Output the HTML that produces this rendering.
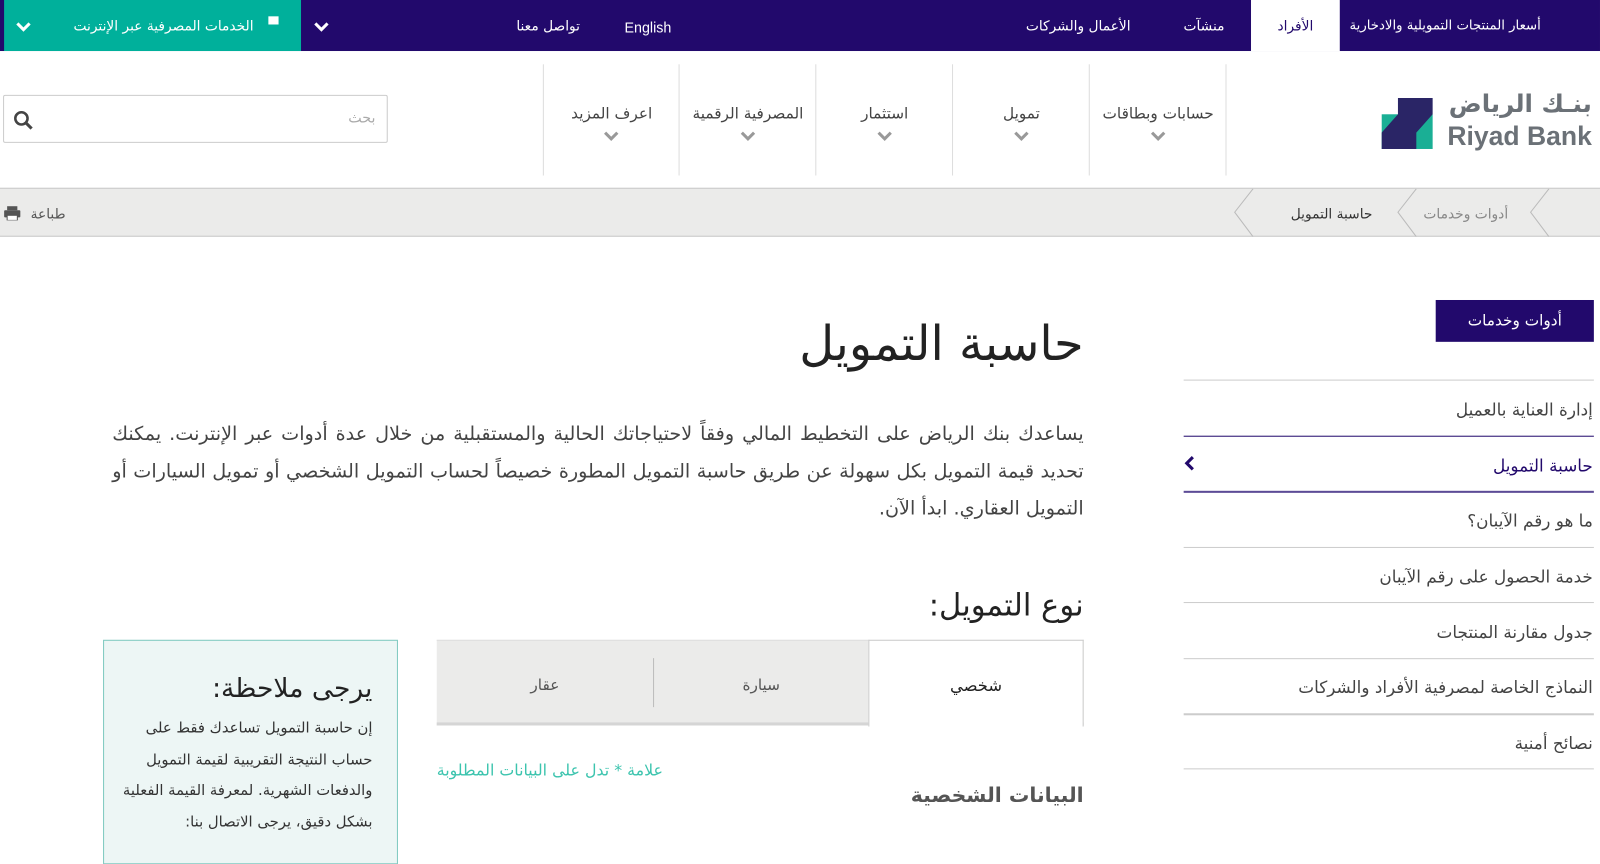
<!DOCTYPE html>
<html><head><meta charset="utf-8"><style>
*{margin:0;padding:0;box-sizing:border-box}
body{width:1600px;height:841px;overflow:hidden;background:#fff;font-family:"DejaVu Sans","Liberation Sans",sans-serif;position:relative;color:#333}
#w{position:absolute;left:0;top:0;width:1568px;height:824px;transform:scale(1.0204);transform-origin:0 0}
.a{position:absolute;white-space:nowrap}
.r{direction:rtl}
</style></head><body><div id="w">
<!-- top bar -->
<div class="a" style="left:0;top:0;width:1568px;height:50px;background:#22096c"></div>
<div class="a" style="left:4px;top:0;width:291px;height:50px;background:#00b09b"></div>
<div class="a" style="left:1226px;top:0;width:87px;height:50px;background:#fff"></div>
<div class="a r" style="left:1226px;width:87px;top:18px;text-align:center;font-size:13.5px;color:#22096c">الأفراد</div>
<div class="a r" style="right:58px;top:18px;font-size:13px;color:#fff">أسعار المنتجات التمويلية والادخارية</div>
<div class="a r" style="right:368px;top:18px;font-size:13.5px;color:#fff">منشآت</div>
<div class="a r" style="right:460px;top:18px;font-size:13.5px;color:#fff">الأعمال والشركات</div>
<div class="a" style="left:612px;top:19px;font-size:14px;color:#fff;font-family:'Liberation Sans'">English</div>
<div class="a r" style="left:506px;top:18px;font-size:13.5px;color:#fff">تواصل معنا</div>
<svg class="a" style="left:307px;top:20px" width="16" height="12"><path d="M2 3l6 6 6-6" stroke="#fff" stroke-width="3" fill="none"/></svg>
<svg class="a" style="left:15px;top:20px" width="16" height="12"><path d="M2 3l6 6 6-6" stroke="#fff" stroke-width="3" fill="none"/></svg>
<div class="a r" style="left:72px;top:18px;font-size:13.5px;color:#fff">الخدمات المصرفية عبر الإنترنت</div>
<div class="a" style="left:263px;top:16px;width:10px;height:8px;background:#fff"></div>
<!-- header -->
<div class="a" style="left:0;top:184px;width:1568px;height:48px;background:#ebebea;border-top:1px solid #c8c8c8;border-bottom:1px solid #c8c8c8"></div>
<svg class="a" style="left:1354px;top:96px" width="52" height="52"><rect x="0" y="16" width="50" height="34" fill="#1aaf95"/><path d="M16 0H50V16L34 34V50H0V34L16 16Z" fill="#2a2566"/></svg>
<div class="a r" style="right:8px;top:88px;font-size:24px;color:#6b7177;font-weight:bold">بنـك الرياض</div>
<div class="a" style="right:8px;top:118px;font-size:26px;color:#6b7177;font-family:'Liberation Sans';font-weight:bold">Riyad Bank</div>
<div class="a" style="left:1201px;top:63px;width:1px;height:109px;background:#ddd"></div>
<div class="a" style="left:1067px;top:63px;width:1px;height:109px;background:#ddd"></div>
<div class="a" style="left:933px;top:63px;width:1px;height:109px;background:#ddd"></div>
<div class="a" style="left:799px;top:63px;width:1px;height:109px;background:#ddd"></div>
<div class="a" style="left:665px;top:63px;width:1px;height:109px;background:#ddd"></div>
<div class="a" style="left:532px;top:63px;width:1px;height:109px;background:#ddd"></div>
<div class="a r" style="left:1068px;width:134px;top:102px;text-align:center;font-size:15px;color:#444">حسابات وبطاقات</div>
<div class="a r" style="left:934px;width:134px;top:102px;text-align:center;font-size:15px;color:#444">تمويل</div>
<div class="a r" style="left:800px;width:134px;top:102px;text-align:center;font-size:15px;color:#444">استثمار</div>
<div class="a r" style="left:666px;width:134px;top:102px;text-align:center;font-size:15px;color:#444">المصرفية الرقمية</div>
<div class="a r" style="left:533px;width:133px;top:102px;text-align:center;font-size:15px;color:#444">اعرف المزيد</div>
<svg class="a" style="left:1127px;top:128px" width="16" height="12"><path d="M2 2l6 6 6-6" stroke="#999" stroke-width="3" fill="none"/></svg>
<svg class="a" style="left:993px;top:128px" width="16" height="12"><path d="M2 2l6 6 6-6" stroke="#999" stroke-width="3" fill="none"/></svg>
<svg class="a" style="left:859px;top:128px" width="16" height="12"><path d="M2 2l6 6 6-6" stroke="#999" stroke-width="3" fill="none"/></svg>
<svg class="a" style="left:725px;top:128px" width="16" height="12"><path d="M2 2l6 6 6-6" stroke="#999" stroke-width="3" fill="none"/></svg>
<svg class="a" style="left:591px;top:128px" width="16" height="12"><path d="M2 2l6 6 6-6" stroke="#999" stroke-width="3" fill="none"/></svg>
<div class="a" style="left:3px;top:93px;width:377px;height:47px;border:1px solid #ccc;border-radius:2px"></div>
<div class="a r" style="right:1200px;top:108px;font-size:14px;color:#aaa">بحث</div>
<svg class="a" style="left:12px;top:107px" width="22" height="22"><circle cx="9" cy="9" r="6" stroke="#444" stroke-width="2.5" fill="none"/><path d="M13 13l6 6" stroke="#444" stroke-width="3"/></svg>
<!-- breadcrumb -->
<svg class="a" style="left:1200px;top:185px" width="368" height="47"><path d="M28 0L10 23L28 47M188 0L170 23L188 47M318 0L300 23L318 47" stroke="#bbb" fill="none"/></svg>
<div class="a r" style="right:90px;top:202px;font-size:13.5px;color:#888">أدوات وخدمات</div>
<div class="a r" style="right:223px;top:202px;font-size:13.5px;color:#333">حاسبة التمويل</div>
<div class="a r" style="left:30px;top:202px;font-size:13.5px;color:#555">طباعة</div>
<svg class="a" style="left:4px;top:202px" width="16" height="14"><rect x="3" y="0" width="10" height="4" fill="#555"/><rect x="0" y="4" width="16" height="7" rx="1" fill="#555"/><rect x="3" y="9" width="10" height="5" fill="#fff" stroke="#555"/></svg>
<!-- main -->
<div class="a r" style="right:506px;top:310px;font-size:47px;color:#222">حاسبة التمويل</div>
<div class="a r" style="right:506px;left:110px;top:408px;font-size:18.8px;line-height:36.5px;color:#444;white-space:normal;text-align:justify">يساعدك بنك الرياض على التخطيط المالي وفقاً لاحتياجاتك الحالية والمستقبلية من خلال عدة أدوات عبر الإنترنت. يمكنك تحديد قيمة التمويل بكل سهولة عن طريق حاسبة التمويل المطورة خصيصاً لحساب التمويل الشخصي أو تمويل السيارات أو التمويل العقاري. ابدأ الآن.</div>
<div class="a r" style="right:506px;top:576px;font-size:30px;color:#222">نوع التمويل:</div>
<div class="a" style="left:428px;top:627px;width:634px;height:84px;background:#ebebea;border-top:1px solid #ddd;border-bottom:3px solid #d5d5d5"></div>
<div class="a" style="left:851px;top:627px;width:211px;height:85px;background:#fff;border:1px solid #ccc;border-bottom:none"></div>
<div class="a" style="left:640px;top:645px;width:1px;height:48px;background:#bbb"></div>
<div class="a r" style="left:851px;width:211px;top:662px;text-align:center;font-size:16px;color:#222">شخصي</div>
<div class="a r" style="left:641px;width:210px;top:662px;text-align:center;font-size:15px;color:#555">سيارة</div>
<div class="a r" style="left:428px;width:212px;top:662px;text-align:center;font-size:15px;color:#555">عقار</div>
<div class="a r" style="left:428px;top:746px;font-size:15.5px;color:#3cc4ae">علامة * تدل على البيانات المطلوبة</div>
<div class="a r" style="right:506px;top:767px;font-size:20px;color:#555;font-weight:bold">البيانات الشخصية</div>
<div class="a" style="left:101px;top:627px;width:289px;height:220px;background:#edf6f5;border:1px solid #7fc9c0"></div>
<div class="a r" style="right:1203px;top:660px;font-size:26px;color:#222">يرجى ملاحظة:</div>
<div class="a r" style="right:1203px;left:108px;top:699px;font-size:14.5px;line-height:30.5px;color:#333;white-space:normal">إن حاسبة التمويل تساعدك فقط على حساب النتيجة التقريبية لقيمة التمويل والدفعات الشهرية. لمعرفة القيمة الفعلية بشكل دقيق، يرجى الاتصال بنا:</div>
<!-- sidebar -->
<div class="a" style="left:1407px;top:294px;width:155px;height:41px;background:#22096c"></div>
<div class="a r" style="left:1407px;width:155px;top:305px;text-align:center;font-size:15px;color:#fff">أدوات وخدمات</div>
<div class="a" style="left:1160px;top:372px;width:402px;height:1px;background:#ccc"></div>
<div class="a" style="left:1160px;top:427px;width:402px;height:1px;background:#22096c"></div>
<div class="a" style="left:1160px;top:481px;width:402px;height:2px;background:#5c4b96"></div>
<div class="a" style="left:1160px;top:536px;width:402px;height:1px;background:#ccc"></div>
<div class="a" style="left:1160px;top:590px;width:402px;height:1px;background:#ccc"></div>
<div class="a" style="left:1160px;top:645px;width:402px;height:1px;background:#ccc"></div>
<div class="a" style="left:1160px;top:699px;width:402px;height:2px;background:#ccc"></div>
<div class="a" style="left:1160px;top:753px;width:402px;height:1px;background:#ccc"></div>
<div class="a r" style="right:7px;top:392px;font-size:16.5px;color:#444">إدارة العناية بالعميل</div>
<div class="a r" style="right:7px;top:447px;font-size:16.5px;color:#22096c">حاسبة التمويل</div>
<svg class="a" style="left:1160px;top:446px" width="12" height="16"><path d="M9 2L3 8l6 6" stroke="#22096c" stroke-width="3" fill="none"/></svg>
<div class="a r" style="right:7px;top:501px;font-size:16.5px;color:#444">ما هو رقم الآيبان؟</div>
<div class="a r" style="right:7px;top:556px;font-size:16.5px;color:#444">خدمة الحصول على رقم الآيبان</div>
<div class="a r" style="right:7px;top:610px;font-size:16.5px;color:#444">جدول مقارنة المنتجات</div>
<div class="a r" style="right:7px;top:664px;font-size:16.5px;color:#444">النماذج الخاصة لمصرفية الأفراد والشركات</div>
<div class="a r" style="right:7px;top:719px;font-size:16.5px;color:#444">نصائح أمنية</div>
</div></body></html>
